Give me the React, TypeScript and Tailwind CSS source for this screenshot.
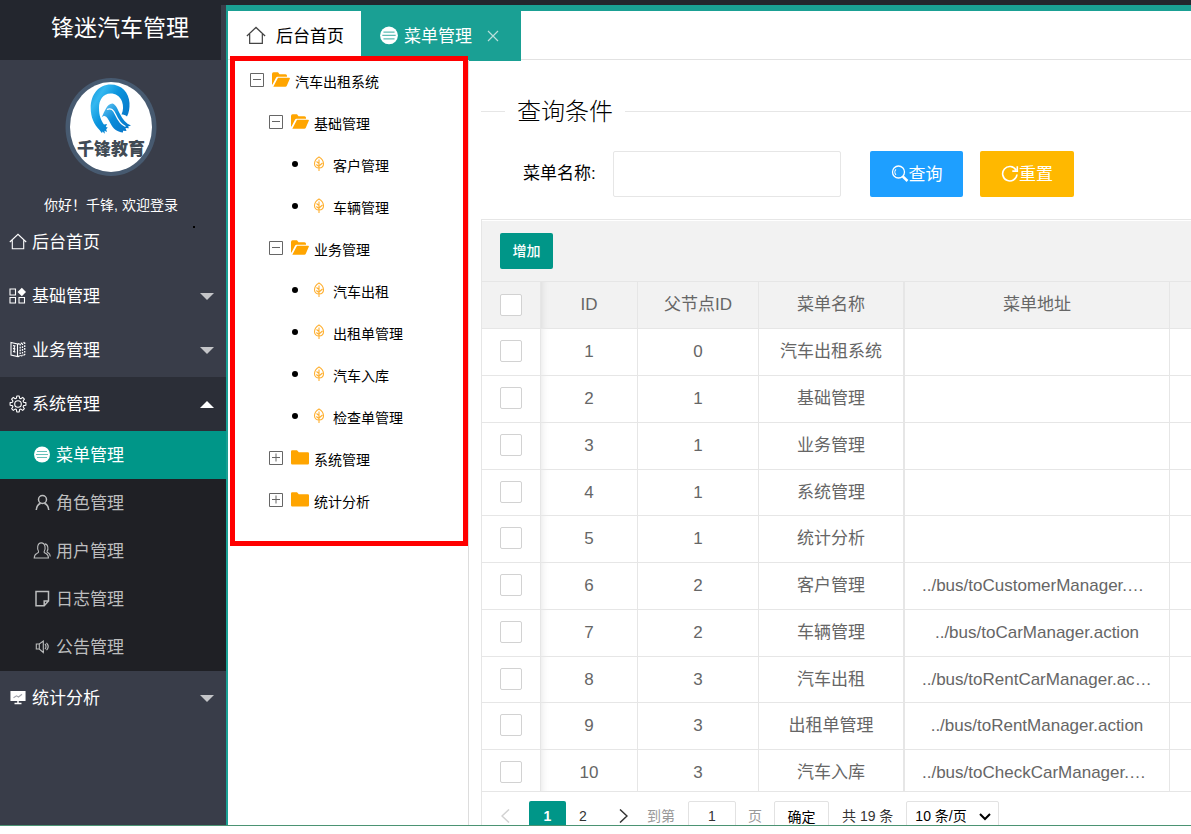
import type { ReactNode } from "react";

type IconProps = { children: ReactNode; className?: string; box?: string };

function Icon({ children, className = "size-[18px]", box = "0 0 18 18" }: IconProps) {
  return (
    <svg
      viewBox={box}
      className={`shrink-0 ${className}`}
      fill="none"
      stroke="currentColor"
      strokeWidth="1.1"
      aria-hidden="true"
    >
      {children}
    </svg>
  );
}

const HomeIcon = ({ className }: { className?: string }) => (
  <Icon className={className}>
    <path d="M.8 9 9 1.300l8.200 7.700M3.300 7.300v8.400h11.400V7.300" />
  </Icon>
);

const BlocksIcon = () => (
  <Icon>
    <path d="M1 2h5.500v6H1zM1 10.500h5.500v5.500H1zM10 10.500h5.500v5.500H10z" />
    <path d="m12.800 .8 4.200 4.200-4.200 4.200L8.600 5z" fill="currentColor" stroke="none" />
  </Icon>
);

const BookIcon = () => (
  <Icon>
    <path d="M2 1.500 8.500 3v12.500L2 14zM4 4.500l2.500.5M4 7.500l2.500.5M4 10.500l2.500.5M5.300 5v6.500" />
    <path d="M9 3l6.500-1.500M9 15.500l6.500-1.500M11.200 3v12M13.500 2.500v12M15.700 1.500v12.500" strokeDasharray="1.600 1.200" strokeWidth="1.300" />
  </Icon>
);

const GearIcon = () => (
  <Icon>
    <path
      d="M7.800 1h2.400l.4 2.200 1.200.5 1.900-1.300 1.700 1.700-1.300 1.900.5 1.200 2.300.4v2.600l-2.300.4-.5 1.200 1.300 1.900-1.700 1.700-1.900-1.300-1.200.5-.4 2.400H7.800l-.4-2.400-1.200-.5-1.900 1.300-1.700-1.700 1.300-1.900-.5-1.200-2.300-.4V7.600l2.300-.4.5-1.200-1.300-1.900 1.700-1.700 1.900 1.300 1.200-.5z"
      strokeLinejoin="round"
    />
    <circle cx="9" cy="9" r="3.300" />
  </Icon>
);

const ListCircleIcon = ({ className, line }: { className?: string; line: string }) => (
  <Icon className={className}>
    <circle cx="9" cy="8.500" r="8" fill="currentColor" stroke="none" />
    <path d="M4 5.500h10M3 8.500h12M4 11.500h10" stroke={line} />
  </Icon>
);

const PersonIcon = () => (
  <Icon>
    <circle cx="9.500" cy="5.500" r="4" strokeWidth="1.500" />
    <path d="M3.300 16c.2-3.500 2-5.800 4.400-6.700M15.700 16c-.2-3.500-2-5.800-4.400-6.700" strokeWidth="1.500" />
  </Icon>
);

const UsersIcon = () => (
  <Icon>
    <path d="M5.600 9.500C4 7.200 4 .9 8.300.9s4.500 6.300 2.900 8.600c-.4 1 .3 1.300 1.800 1.900 1.800.7 2.300 1.700 2.500 4.600H1.200c.2-2.900.7-3.900 2.600-4.600 1.500-.6 2.200-.9 1.800-1.900z" />
    <path d="M11.800 1.900c3.500.3 3.700 5.500 2.300 7.300-.5 1 .3 1.300 1.400 1.900 1.300.7 1.600 1.700 1.800 3.400" />
  </Icon>
);

const NoteIcon = () => (
  <Icon>
    <path d="M3 1.500h12.500v9.500l-4.300 4.700H3zM15.500 11h-4.300v4.700" strokeWidth="1.500" />
  </Icon>
);

const SpeakerIcon = () => (
  <Icon>
    <path d="M3.300 6h3L10.300 3v11.500l-4-3.500h-3zM6.300 6v5M12 6c1.300 1.200 1.300 3.800 0 5M13.500 4.800c2 2.200 2 5.200 0 7.400" />
  </Icon>
);

const BoardIcon = () => (
  <Icon>
    <path d="M2 2.500h14v9H2z" fill="currentColor" />
    <path d="M9 11.500v3M5.500 14.500h7" strokeWidth="1.500" />
    <path d="m4.500 8.800 3-2 2 1.200 3.500-2.800" stroke="#a0a2aa" />
  </Icon>
);

const FolderIcon = ({ open }: { open: boolean }) => (
  <Icon className="size-[18px] text-[#ffa500]">
    {open ? (
      <path
        d="M0 3q0-1.800 1.500-1.800h4.500l1.500 2h6q1.500 0 1.500 1.500v1H5.500q-1 0-1.500 1L.5 13.500H0zM6 6.700h11.300q.9 0 .5 1l-3 7q-.4 1-1.500 1H1.300z"
        fill="currentColor"
        stroke="none"
      />
    ) : (
      <path d="M0 2.500Q0 1.200 1.300 1.200H6l1.800 2h9q1.200 0 1.200 1.200v9.800q0 1.300-1.200 1.300H1.200Q0 15.500 0 14.200z" fill="currentColor" stroke="none" />
    )}
  </Icon>
);

const LeafIcon = () => (
  <Icon className="size-[18px] text-[#ffb031]">
    <path d="M9 2c3 1.800 4.500 4.300 4.500 6.800S11.500 13 9 13s-4.500-1.700-4.500-4.200S6 3.800 9 2zM9 4.500v11.500M9 8.500 6.500 6.500M9 11.500 6.300 9.500M9 11l3.500-3" />
  </Icon>
);

const ToggleIcon = ({ open }: { open: boolean }) => (
  <Icon className="size-[14px] text-[#666]" box="0 0 14 14">
    <path d={open ? "M.5.500h13v13H.500zM3 6.500h8" : "M.5.500h13v13H.500zM3 6.500h8M7 2.500v8"} strokeWidth="1" />
  </Icon>
);

const SearchIcon = () => (
  <Icon>
    <circle cx="7.500" cy="7" r="6" strokeWidth="1.300" />
    <path d="M5 4.300c-1.500 1.500-1.500 4 0 5.500" />
    <path d="m11.800 11.500 4.700 4.500" strokeWidth="2.500" />
  </Icon>
);

const ResetIcon = () => (
  <Icon>
    <path d="M15 5A7.200 7.200 0 1 0 16 9.500M16.300 1.300v4.800h-5" strokeWidth="1.600" />
  </Icon>
);

const Caret = ({ up }: { up?: boolean }) => (
  <svg viewBox="0 0 14 7" className={`h-[7px] w-[14px] ${up ? "text-white" : "text-[#c4c5c8]"}`} aria-hidden="true">
    <path d={up ? "M0 7 7 0l7 7z" : "M0 0h14L7 7z"} fill="currentColor" />
  </svg>
);

function Logo() {
  return (
    <svg viewBox="0 0 92 98" className="mx-auto h-[98px] w-[92px]" role="img" aria-label="千锋教育">
      <defs>
        <linearGradient id="ring" x1="0" y1="0" x2="1" y2=".8">
          <stop offset="0" stopColor="#0a8fd8" />
          <stop offset=".25" stopColor="#35b8f0" />
          <stop offset=".5" stopColor="#0b94dd" />
          <stop offset="1" stopColor="#0670c4" />
        </linearGradient>
        <linearGradient id="strand" x1="0" y1="0" x2="1" y2="1">
          <stop offset="0" stopColor="#6fcdf5" />
          <stop offset=".45" stopColor="#0a8cda" />
          <stop offset="1" stopColor="#0872c6" />
        </linearGradient>
      </defs>
      <ellipse cx="46" cy="49" rx="45.500" ry="49" fill="#475a70" />
      <ellipse cx="46" cy="49" rx="41" ry="45" fill="#fff" />
      <path
        d="M62 38.500c-1.500-1.500-3.500-2-5.500-2 2-4 2-9 .5-13C55 18 50.500 15.500 45.500 15.500 38 15.500 34 22 34 30c0 7.500 2 12.500 5 16.500l3-.5-1.200 3 2 .5-1.600 1.800.8 2.700-2.500-1.300.3 3-2.300-2.200-.5 1.700-2.500-3.200C29 46.500 25.700 39 25.700 30 25.700 16 34 6.500 45.500 6.500c11 0 18.500 8 19 18.500.2 5-.5 9.500-2.500 13.500z"
        fill="url(#ring)"
      />
      <path
        d="M36.500 39.500c2-3.500 2.500-6 4.500-9 1.500-2.800 3.500-4.600 6.500-5 3.500 1.200 5 5.500 7.500 10.500 2.500 5.500 6 9.500 11 11.500l-3 1 1 1.700-3.500-.2 1 3-3.500-.2v1.700c-6-.5-10-4-12.500-9-2-4-3.500-7-6-7.500-1.300 0-2 .5-3 1.500z"
        fill="url(#strand)"
      />
      <path d="M42 31.500c4-2 6.500.5 8.500 5s5.500 10 10 12" fill="none" stroke="#fff" strokeWidth="1.300" />
      <text x="46" y="77" textAnchor="middle" fontSize="17" fill="#414b55" className="font-black">
        千锋教育
      </text>
    </svg>
  );
}

type MenuEntry = { label: string; icon: ReactNode; children?: { label: string; icon: ReactNode }[]; leaf?: boolean };

const menu: MenuEntry[] = [
  { label: "后台首页", icon: <HomeIcon />, leaf: true },
  { label: "基础管理", icon: <BlocksIcon /> },
  { label: "业务管理", icon: <BookIcon /> },
  {
    label: "系统管理",
    icon: <GearIcon />,
    children: [
      { label: "菜单管理", icon: <ListCircleIcon line="#66c0b8" /> },
      { label: "角色管理", icon: <PersonIcon /> },
      { label: "用户管理", icon: <UsersIcon /> },
      { label: "日志管理", icon: <NoteIcon /> },
      { label: "公告管理", icon: <SpeakerIcon /> },
    ],
  },
  { label: "统计分析", icon: <BoardIcon /> },
];

function Sidebar() {
  return (
    <aside className="relative w-[226px] shrink-0 bg-[#393d49] text-white">
      <h1 className="mr-[5px] flex h-[55px] items-center bg-[#23262e] pb-[8px] pl-[51px] text-[23px] font-normal">锋迷汽车管理</h1>
      <div className="pt-[18px] pr-[4px]">
        <Logo />
        <p className="mt-[20px] h-[19px] text-center text-[14px] leading-[19px]">你好！千锋, 欢迎登录</p>
      </div>
      <span className="absolute top-[221px] left-[193px] size-[2px] bg-black" />
      <nav>
        <ul>
          {menu.map((m) => (
            <li key={m.label}>
              <a
                href="#"
                className={`flex h-[54px] items-center gap-[5px] pr-[12px] pl-[9px] text-[17px] ${m.children ? "bg-[#2b2e37]" : ""}`}
              >
                {m.icon}
                <span className="flex-1 pt-[2px]">{m.label}</span>
                {!m.leaf && <Caret up={!!m.children} />}
              </a>
              {m.children && (
                <ul className="bg-[#1f2025]">
                  {m.children.map((c, i) => (
                    <li key={c.label}>
                      <a
                        href="#"
                        className={`flex h-[48px] items-center gap-[5px] pl-[33px] text-[17px] ${i === 0 ? "bg-[#009688] text-white" : "text-[#bcbdbe]"}`}
                      >
                        {c.icon}
                        <span className="pt-[2px]">{c.label}</span>
                      </a>
                    </li>
                  ))}
                </ul>
              )}
            </li>
          ))}
        </ul>
      </nav>
    </aside>
  );
}

function TabBar() {
  return (
    <div className="flex h-[49px] shrink-0 border-b border-[#e2e2e2] text-[17px]">
      <button type="button" className="flex h-[49px] w-[133px] items-center gap-[10px] pl-[18px] text-black">
        <HomeIcon className="size-[20px] text-[#444]" />
        <span className="pt-[2px]">后台首页</span>
      </button>
      <button type="button" className="flex h-[50px] w-[160px] items-center gap-[5px] bg-[#1aa094] pl-[18px] text-white">
        <ListCircleIcon className="size-[20px]" line="#5fbdb4" />
        <span className="pt-[2px]">菜单管理</span>
        <svg viewBox="0 0 12 12" className="ml-[10px] size-[12px]" stroke="#b9dfdb" strokeWidth="1.2" aria-hidden="true">
          <path d="m1 1 10 10M11 1 1 11" />
        </svg>
      </button>
    </div>
  );
}

type Node = { label: string; open?: boolean; children?: Node[] };

const tree: Node[] = [
  {
    label: "汽车出租系统",
    open: true,
    children: [
      { label: "基础管理", open: true, children: [{ label: "客户管理" }, { label: "车辆管理" }] },
      {
        label: "业务管理",
        open: true,
        children: [{ label: "汽车出租" }, { label: "出租单管理" }, { label: "汽车入库" }, { label: "检查单管理" }],
      },
      { label: "系统管理", open: false },
      { label: "统计分析", open: false },
    ],
  },
];

function TreeList({ nodes }: { nodes: Node[] }) {
  return (
    <ul className="pl-[19px]">
      {nodes.map((n) => (
        <li key={n.label}>
          <div className="flex h-[42px] items-center pb-[2px] text-[14px] text-black">
            {n.open === undefined ? (
              <>
                <span className="mr-[12px] ml-[4px] size-[6px] rounded-full bg-black" />
                <LeafIcon />
              </>
            ) : (
              <>
                <button type="button" aria-label={n.label} className="mr-[8px]">
                  <ToggleIcon open={n.open} />
                </button>
                <FolderIcon open={n.open} />
              </>
            )}
            <span className="ml-[5px] pt-[4px]">{n.label}</span>
          </div>
          {n.children && <TreeList nodes={n.children} />}
        </li>
      ))}
    </ul>
  );
}

const rows: [number, number, string, string][] = [
  [1, 0, "汽车出租系统", ""],
  [2, 1, "基础管理", ""],
  [3, 1, "业务管理", ""],
  [4, 1, "系统管理", ""],
  [5, 1, "统计分析", ""],
  [6, 2, "客户管理", "../bus/toCustomerManager.action"],
  [7, 2, "车辆管理", "../bus/toCarManager.action"],
  [8, 3, "汽车出租", "../bus/toRentCarManager.action"],
  [9, 3, "出租单管理", "../bus/toRentManager.action"],
  [10, 3, "汽车入库", "../bus/toCheckCarManager.action"],
];

const cell = "border-r border-b border-[#e6e6e6] font-normal";
const edge = "shadow-[inset_8px_0_8px_-8px_rgba(0,0,0,0.12)]";
const box = "block mx-auto size-[22px] appearance-none rounded-[2px] border border-[#d2d2d2] bg-white";

function DataTable() {
  return (
    <div className="min-h-0 flex-1 overflow-hidden">
      <table className="w-full table-fixed border-separate border-spacing-0 text-center text-[17px] text-[#666]">
        <colgroup>
          <col className="w-[59px]" />
          <col className="w-[97px]" />
          <col className="w-[121px]" />
          <col className="w-[146px]" />
          <col className="w-[265px]" />
          <col />
        </colgroup>
        <thead className="bg-[#f2f2f2]">
          <tr className="h-[47px]">
            <th className={cell}>
              <input type="checkbox" aria-label="全选" className={box} />
            </th>
            <th className={`${cell} ${edge}`}>ID</th>
            <th className={cell}>父节点ID</th>
            <th className={`${cell} border-r-2`}>菜单名称</th>
            <th className={cell}>菜单地址</th>
            <th className="border-b border-[#e6e6e6]" />
          </tr>
        </thead>
        <tbody>
          {rows.map(([id, parent, name, url]) => (
            <tr key={id} className="h-[47px] nth-[4n]:h-[46px]">
              <td className={`${cell} pb-[2px]`}>
                <input type="checkbox" aria-label={name} className={box} />
              </td>
              <td className={`${cell} ${edge}`}>{id}</td>
              <td className={cell}>{parent}</td>
              <td className={`${cell} border-r-2`}>{name}</td>
              <td className={`${cell} truncate px-[17px]`}>{url}</td>
              <td className="border-b border-[#e6e6e6]" />
            </tr>
          ))}
        </tbody>
      </table>
    </div>
  );
}

function Pager() {
  return (
    <div className="flex h-[34px] shrink-0 items-start overflow-hidden border-t border-[#e6e6e6] pt-[9px] text-[14px] leading-[30px] text-[#333]">
      <button type="button" aria-label="上一页" className="flex h-[30px] w-[47px] items-center pl-[19px]">
        <svg viewBox="0 0 9 14" className="h-[14px] w-[9px]" fill="none" stroke="#d2d2d2" strokeWidth="1.5" aria-hidden="true">
          <path d="M8 .5 1 7l7 6.500" />
        </svg>
      </button>
      <button type="button" className="h-[30px] w-[37px] rounded-[2px] bg-[#009688] font-bold text-white">1</button>
      <button type="button" className="h-[30px] w-[34px]">2</button>
      <button type="button" aria-label="下一页" className="flex h-[30px] w-[47px] items-center pl-[19px]">
        <svg viewBox="0 0 9 14" className="h-[14px] w-[9px]" fill="none" stroke="#333" strokeWidth="1.5" aria-hidden="true">
          <path d="m1 .5 7 6.500-7 6.500" />
        </svg>
      </button>
      <label className="flex shrink-0 text-[#999]">
        到第
        <input
          defaultValue="1"
          className="mr-[12px] ml-[13px] h-[30px] w-[48px] rounded-[2px] border border-[#e2e2e2] bg-white text-center text-[#333]"
        />
        页
      </label>
      <button type="button" className="ml-[12px] h-[30px] w-[55px] shrink-0 rounded-[2px] border border-[#e2e2e2] text-black">
        确定
      </button>
      <span className="mx-[13px] shrink-0">共 19 条</span>
      <div className="relative shrink-0">
        <select
          aria-label="每页条数"
          className="h-[30px] w-[93px] appearance-none rounded-[2px] border border-[#e2e2e2] bg-white pl-[8px] leading-[28px] text-black"
        >
          <option>10 条/页</option>
        </select>
        <svg
          viewBox="0 0 12 8"
          className="pointer-events-none absolute top-[12px] right-[8px] h-[8px] w-[12px]"
          fill="none"
          stroke="#000"
          strokeWidth="2"
          aria-hidden="true"
        >
          <path d="m1 1 5 5 5-5" />
        </svg>
      </div>
    </div>
  );
}

function Content() {
  return (
    <main className="flex min-w-0 flex-1 flex-col pt-[35px] pl-[12px]">
      <div className="flex h-[32px] shrink-0 items-center">
        <span className="h-px w-[24px] bg-[#e6e6e6]" />
        <h2 className="px-[12px] pt-[2px] text-[24px] font-light text-black">查询条件</h2>
        <span className="h-px flex-1 bg-[#e6e6e6]" />
      </div>
      <form className="mt-[24px] flex h-[46px] shrink-0 items-center text-[17px]" onSubmit={(e) => e.preventDefault()}>
        <label htmlFor="menu-name" className="w-[132px] shrink-0 pl-[42px] text-black">
          菜单名称:
        </label>
        <input id="menu-name" className="h-[46px] w-[228px] rounded-[2px] border border-[#e6e6e6] px-[10px]" />
        <button type="submit" className="ml-[29px] flex h-[46px] w-[93px] items-center justify-center rounded-[2px] bg-[#1e9fff] text-white">
          <SearchIcon />
          <span className="pt-[2px]">查询</span>
        </button>
        <button type="reset" className="ml-[17px] flex h-[46px] w-[94px] items-center justify-center rounded-[2px] bg-[#ffb800] text-white">
          <ResetIcon />
          <span className="pt-[2px]">重置</span>
        </button>
      </form>
      <section className="mt-[22px] flex min-h-0 flex-1 flex-col border-t border-l border-[#e6e6e6]">
        <div className="mt-px flex h-[61px] shrink-0 items-center border-b border-[#e6e6e6] bg-[#f2f2f2] pl-[18px]">
          <button type="button" className="h-[36px] w-[53px] rounded-[2px] bg-[#009688] text-[14px] font-medium text-white">
            增加
          </button>
        </div>
        <DataTable />
        <Pager />
      </section>
    </main>
  );
}

export default function App() {
  return (
    <div className="flex h-screen flex-col bg-white pb-[8px] font-['Liberation_Sans','Noto_Sans_CJK_SC',sans-serif]">
      <div className="h-[5px] shrink-0 bg-[#23262e]" />
      <div className="flex min-h-0 flex-1 overflow-hidden border-b border-[#4b9373]">
        <Sidebar />
        <div className="flex min-w-0 flex-1 flex-col border-t-6 border-l-2 border-[#1aa094]">
          <TabBar />
          <div className="flex min-h-0 flex-1">
            <div className="relative w-[241px] shrink-0 border-r border-[#ddd] pl-[3px]">
              <TreeList nodes={tree} />
              <div className="pointer-events-none absolute -top-[4px] left-[2px] h-[490px] w-[238px] border-5 border-[#f00]" />
            </div>
            <Content />
          </div>
        </div>
      </div>
    </div>
  );
}
